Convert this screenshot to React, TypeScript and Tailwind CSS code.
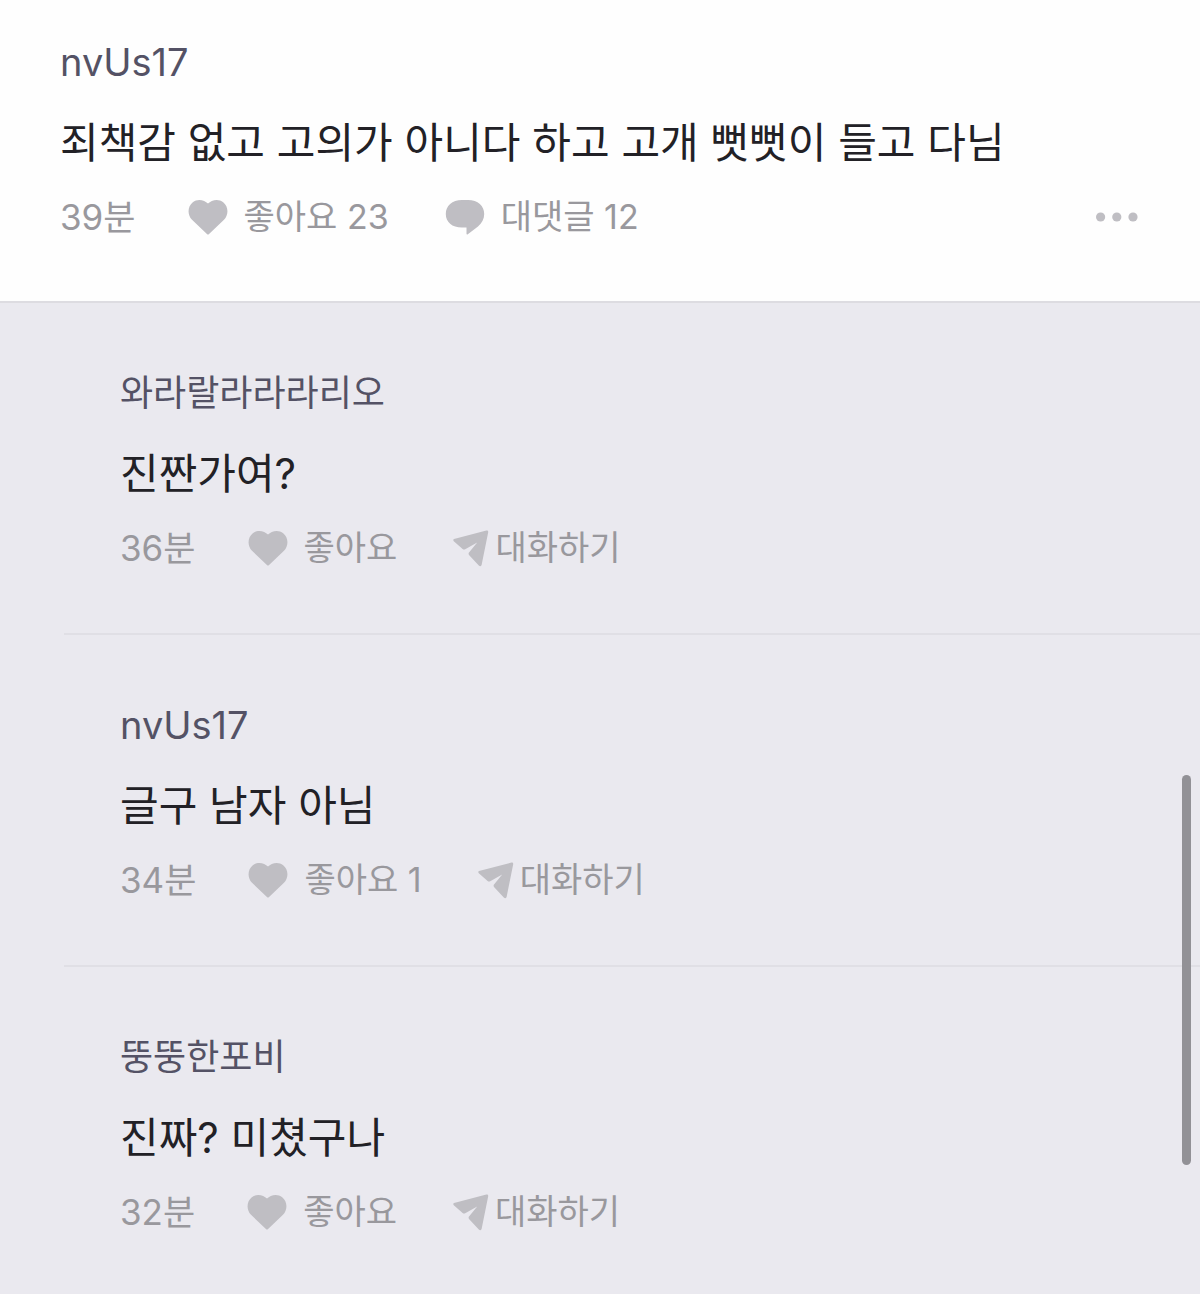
import { type ReactNode } from "react";

type Comment = { id: number; author: string; body: string; time: string; likes: number };

const replies: Comment[] = [
  { id: 1, author: "와라랄라라라리오", body: "진짠가여?", time: "36분", likes: 0 },
  { id: 2, author: "nvUs17", body: "글구 남자 아님", time: "34분", likes: 1 },
  { id: 3, author: "뚱뚱한포비", body: "진짜? 미쳤구나", time: "32분", likes: 0 },
];

export default function App() {
  return (
    <main className="relative min-h-screen bg-[#eae9ef] font-[Inter,'Noto_Sans_CJK_KR',sans-serif] text-[#222126]">
      <article className="border-b-2 border-[#dddce1] bg-[#fefefe] px-15 pt-9 pb-[58px]">
        <Author name="nvUs17" />
        <Body>죄책감 없고 고의가 아니다 하고 고개 뻣뻣이 들고 다님</Body>
        <div className="mt-[17px] flex items-center text-[#99989d]">
          <Time>39분</Time>
          <LikeButton likes={23} />
          <button type="button" className="ml-14 flex items-center gap-4 text-[34px] leading-13">
            <BubbleIcon />
            대댓글 12
          </button>
          <button type="button" aria-label="더보기" className="ml-auto">
            <DotsIcon />
          </button>
        </div>
      </article>

      <ul>
        {replies.map((reply) => (
          <Reply key={reply.id} reply={reply} />
        ))}
      </ul>

      <div className="absolute top-[775px] right-[9px] h-[390px] w-[9px] rounded-full bg-[#929196]" />
    </main>
  );
}

function Reply({ reply }: { reply: Comment }) {
  return (
    <li className="ml-16 border-b-2 border-[#e0dfe5] pt-16 pr-15 pb-[59px] pl-14 last:border-b-0">
      <Author name={reply.author} />
      <Body>{reply.body}</Body>
      <div className="mt-[17px] flex items-center text-[#99989d]">
        <Time>{reply.time}</Time>
        <LikeButton likes={reply.likes} />
        <button type="button" className="ml-14 flex items-center gap-[6px] text-[34px] leading-13">
          <SendIcon />
          대화하기
        </button>
      </div>
    </li>
  );
}

// Hangul glyphs look larger than Latin ones at the same size
function Author({ name }: { name: string }) {
  const size = /[가-힣]/.test(name) ? "text-[36px]" : "text-[38px]";
  return <p className={`${size} leading-13 text-[#545265]`}>{name}</p>;
}

function Body({ children }: { children: ReactNode }) {
  return <p className="mt-6 text-[42px] leading-[62px]">{children}</p>;
}

function Time({ children }: { children: ReactNode }) {
  return <span className="text-[35px] leading-13">{children}</span>;
}

function LikeButton({ likes }: { likes: number }) {
  return (
    <button type="button" className="ml-13 flex items-center gap-4 text-[34px] leading-13">
      <HeartIcon />
      {likes > 0 ? `좋아요 ${likes}` : "좋아요"}
    </button>
  );
}

function HeartIcon() {
  return (
    <svg viewBox="0 0 40 36" className="h-9 w-10" fill="#bfbec3" aria-hidden="true">
      <path d="M20 4.6C16.5 .8 9.5 -.6 4.8 3.2C-.6 7.6-.8 15.5 4 20.8L19.2 35.2Q20 35.9 20.8 35.2L36 20.8C40.8 15.5 40.6 7.6 35.2 3.2C30.5 -.6 23.5 .8 20 4.6Z" />
    </svg>
  );
}

function BubbleIcon() {
  return (
    <svg viewBox="0 0 40 36" className="h-9 w-10" fill="#bfbec3" aria-hidden="true">
      <path d="M17 1H23C33 1 39.2 7 39.2 15C39.2 20 37 24 33 27.5L22.8 35.3C22 35.8 21.5 35.5 21.5 34.6V28.6H17C7 28.6 .8 23 .8 15C.8 7 7 1 17 1Z" />
    </svg>
  );
}

function SendIcon() {
  return (
    <svg viewBox="0 0 36 38" className="h-[38px] w-9" fill="#bfbec3" aria-hidden="true">
      <path d="M1 10L33.4 1.6Q35.4 1.2 35.2 3.2L28.6 36Q27.6 38.2 25.8 36.6L16 26Q15.2 24.8 16 23.6L24.2 13.4L12.2 20.2Q10.8 20.9 9.6 19.9L.8 12.2Q-.4 10.6 1 10Z" />
    </svg>
  );
}

function DotsIcon() {
  return (
    <svg viewBox="0 0 44 12" className="h-3 w-11" fill="#bfbec3" aria-hidden="true">
      <circle cx="4.6" cy="6" r="4.6" />
      <circle cx="20.8" cy="6" r="4.6" />
      <circle cx="37" cy="6" r="4.6" />
    </svg>
  );
}
